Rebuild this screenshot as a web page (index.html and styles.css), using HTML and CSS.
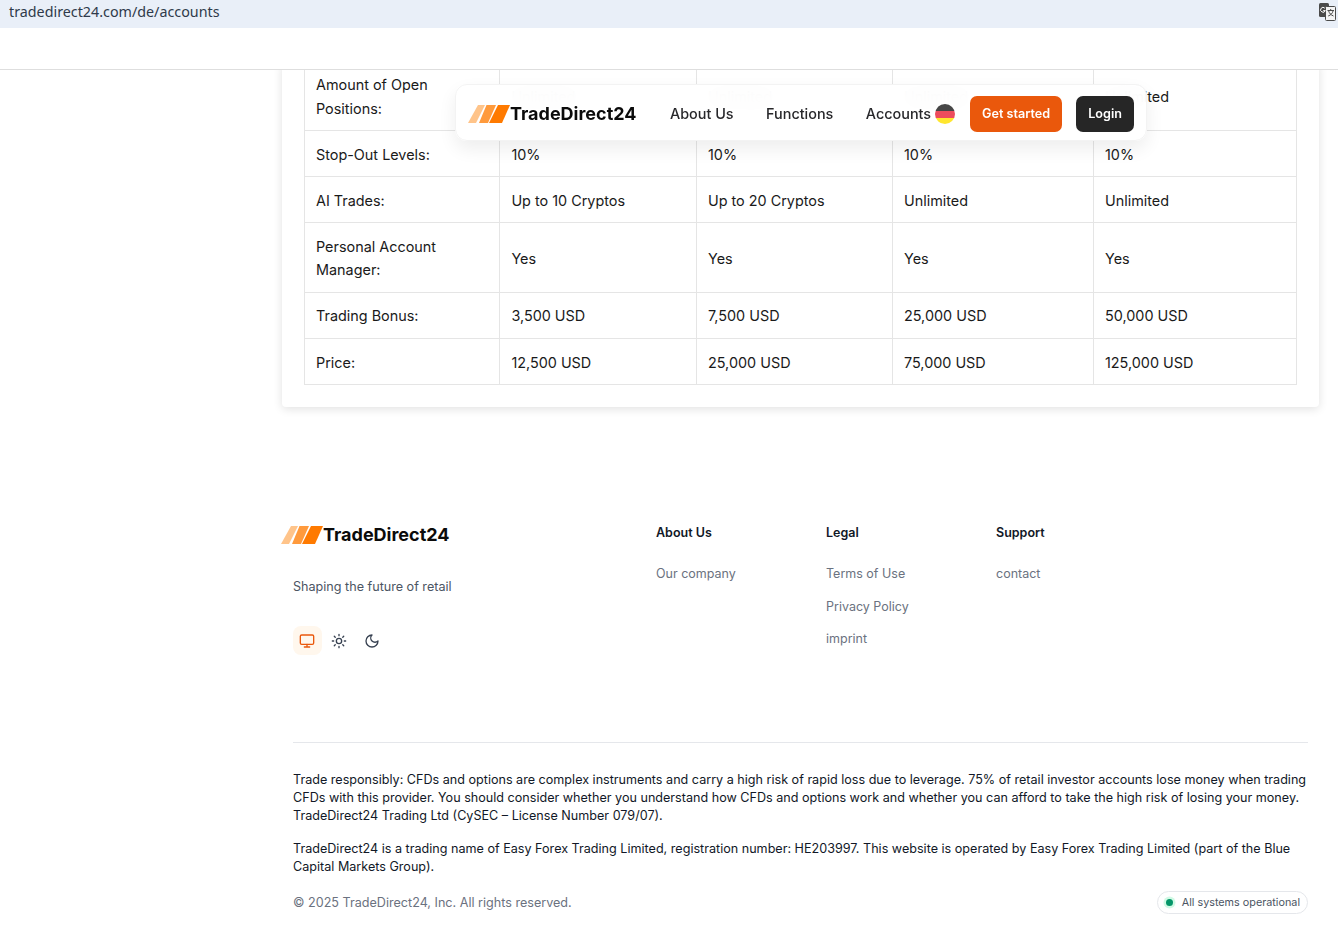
FILE: index.html
```html
<!DOCTYPE html>
<html lang="en">
<head>
<meta charset="utf-8">
<title>TradeDirect24 Accounts</title>
<link rel="stylesheet" href="styles.css">
</head>
<body>
<div class="urlbar">
  <span class="url">tradedirect24.com/de/accounts</span>
  <svg class="translate" viewBox="0 0 18 18" width="18" height="18" aria-hidden="true">
    <rect x="1" y="0" width="10" height="14" rx="1.500" fill="#4a4a4a"/>
    <rect x="7.500" y="3.500" width="10" height="14" rx="1" fill="#f4f4f4" stroke="#4a4a4a"/>
    <path d="M6.800 5.200a2.400 2.400 0 1 0 .5 2.400H5.200" fill="none" stroke="#fff" stroke-width="1"/>
    <path d="M9.500 7.500h6.500M12.700 6v1.500M10.500 7.500c.8 3 2.500 4.500 5 5.500M15.200 7.500c-.6 2.800-2.300 4.500-5 5.500" fill="none" stroke="#4a4a4a" stroke-width="1"/>
  </svg>
</div>
<div class="tabstrip"></div>

<main class="viewport">
  <nav class="floatnav">
    <a class="brand">
      <svg class="logo" viewBox="0 0 42 18" width="42" height="18" aria-hidden="true">
        <polygon points="0,18 8,18 17,0 10,0" fill="#ffc48a"/>
        <polygon points="11,18 20,18 28,0 18.500,0" fill="#ff9a3c"/>
        <polygon points="21,18 34,18 42,0 30,0" fill="#ff7a00"/>
      </svg>
      <span class="brandname">TradeDirect24</span>
    </a>
    <div class="navlinks">
      <a>About Us</a>
      <a>Functions</a>
      <a>Accounts</a>
    </div>
    <svg class="flag" viewBox="0 0 20 20" width="20" height="20" aria-hidden="true">
      <defs><clipPath id="flagclip"><circle cx="10" cy="10" r="10"/></clipPath></defs>
      <g clip-path="url(#flagclip)">
        <rect width="20" height="7" fill="#464646"/>
        <rect y="7" width="20" height="7" fill="#ed4c5c"/>
        <rect y="14" width="20" height="6" fill="#ffe62e"/>
      </g>
    </svg>
    <a class="btn btn-orange">Get started</a>
    <a class="btn btn-dark">Login</a>
  </nav>

  <section class="card">
    <table class="plans">
      <colgroup>
        <col class="c1"><col class="c2"><col class="c3"><col class="c4"><col class="c5">
      </colgroup>
      <tbody>
        <tr class="row-clipped"><td>Amount of Open Positions:</td><td>Unlimited</td><td>Unlimited</td><td>Unlimited</td><td>Unlimited</td></tr>
        <tr class="row-low"><td>Stop-Out Levels:</td><td>10%</td><td>10%</td><td>10%</td><td>10%</td></tr>
        <tr class="row-low"><td>AI Trades:</td><td>Up to 10 Cryptos</td><td>Up to 20 Cryptos</td><td>Unlimited</td><td>Unlimited</td></tr>
        <tr class="row-tall"><td>Personal Account Manager:</td><td class="cell-low">Yes</td><td class="cell-low">Yes</td><td class="cell-low">Yes</td><td class="cell-low">Yes</td></tr>
        <tr><td>Trading Bonus:</td><td>3,500 USD</td><td>7,500 USD</td><td>25,000 USD</td><td>50,000 USD</td></tr>
        <tr class="row-low"><td>Price:</td><td>12,500 USD</td><td>25,000 USD</td><td>75,000 USD</td><td>125,000 USD</td></tr>
      </tbody>
    </table>
  </section>

  <footer class="footer">
    <div class="footgrid">
      <div class="footbrand">
        <a class="brand brand-foot">
          <svg class="logo" viewBox="0 0 42 18" width="42" height="18" aria-hidden="true">
            <polygon points="0,18 8,18 17,0 10,0" fill="#ffc48a"/>
            <polygon points="11,18 20,18 28,0 18.500,0" fill="#ff9a3c"/>
            <polygon points="21,18 34,18 42,0 30,0" fill="#ff7a00"/>
          </svg>
          <span class="brandname">TradeDirect24</span>
        </a>
        <p class="tagline">Shaping the future of retail</p>
        <div class="themes">
          <button class="theme theme-on" aria-label="System">
            <svg viewBox="0 0 24 24" width="16" height="16" fill="none" stroke="currentColor" stroke-width="2" stroke-linecap="round" stroke-linejoin="round"><rect x="2" y="3" width="20" height="14" rx="2"/><path d="M8 21h8M12 17v4"/></svg>
          </button>
          <button class="theme theme-sun" aria-label="Light">
            <svg viewBox="0 0 24 24" width="16" height="16" fill="none" stroke="currentColor" stroke-width="2" stroke-linecap="round" stroke-linejoin="round"><circle cx="12" cy="12" r="4"/><path d="M12 2v2M12 20v2M4.930 4.930l1.410 1.410M17.660 17.660l1.410 1.410M2 12h2M20 12h2M6.340 17.660l-1.410 1.410M19.070 4.930l-1.410 1.410"/></svg>
          </button>
          <button class="theme" aria-label="Dark">
            <svg viewBox="0 0 24 24" width="16" height="16" fill="none" stroke="currentColor" stroke-width="2" stroke-linecap="round" stroke-linejoin="round"><path d="M12 3a6 6 0 0 0 9 9 9 9 0 1 1-9-9Z"/></svg>
          </button>
        </div>
      </div>
      <div class="footcol">
        <h4>About Us</h4>
        <a>Our company</a>
      </div>
      <div class="footcol">
        <h4>Legal</h4>
        <a>Terms of Use</a>
        <a>Privacy Policy</a>
        <a>imprint</a>
      </div>
      <div class="footcol">
        <h4>Support</h4>
        <a>contact</a>
      </div>
    </div>

    <div class="legal">
      <p>Trade responsibly: CFDs and options are complex instruments and carry a high risk of rapid loss due to leverage. 75% of retail investor accounts lose money when trading CFDs with this provider. You should consider whether you understand how CFDs and options work and whether you can afford to take the high risk of losing your money. TradeDirect24 Trading Ltd (CySEC – License Number 079/07).</p>
      <p>TradeDirect24 is a trading name of Easy Forex Trading Limited, registration number: HE203997. This website is operated by Easy Forex Trading Limited (part of the Blue Capital Markets Group).</p>
    </div>

    <div class="bottom">
      <span class="copy">© 2025 TradeDirect24, Inc. All rights reserved.</span>
      <span class="status"><i class="dot"></i>All systems operational</span>
    </div>
  </footer>
</main>
</body>
</html>
```
FILE: styles.css
```css
* { box-sizing: border-box; }
html, body { margin: 0; height: 951px; overflow: hidden; background: #fff; }
body { font-family: Inter, "Liberation Sans", sans-serif; color: #111827; }
a { color: inherit; text-decoration: none; }

.urlbar {
  height: 28px;
  background: #e9eff8;
  display: flex;
  align-items: center;
  justify-content: space-between;
  padding: 0 2px 5px 9px;
}
.url { font-family: "Noto Sans", sans-serif; font-size: 14.300px; color: #2f3a4a; }
.tabstrip { height: 42px; background: #fff; border-bottom: 1px solid #dedede; }

.viewport { position: relative; height: 881px; overflow: hidden; padding-left: 282px; }

.floatnav {
  position: absolute;
  left: 455px;
  top: 14px;
  width: 692px;
  height: 57px;
  display: flex;
  align-items: center;
  padding: 2px 0 0 12px;
  background: rgba(255, 255, 255, .94);
  -webkit-backdrop-filter: blur(10px);
  backdrop-filter: blur(10px);
  border: 1px solid #f3f3f3;
  border-radius: 12px;
  box-shadow: 0 8px 18px rgba(0, 0, 0, .07);
  z-index: 5;
}
.brand { display: flex; align-items: center; }
.brandname { font-size: 18px; font-weight: 700; color: #0b0b0b; }
.navlinks { display: flex; gap: 32.500px; margin-left: 33.500px; font-size: 14.400px; font-weight: 500; color: #27272a; }
.flag { margin-left: 4px; }
.btn {
  display: flex; align-items: center; justify-content: center;
  height: 36px; border-radius: 7px;
  font-size: 12.600px; font-weight: 600; color: #fff;
}
.btn-orange { width: 92px; margin-left: 15px; background: #ea580c; }
.btn-dark { width: 58px; margin-left: 14px; background: #262626; }

.card {
  width: 1037px;
  margin-top: -8px;
  padding: 0 22px 22px;
  background: #fff;
  border-radius: 4px;
  box-shadow: 0 2px 10px rgba(0, 0, 0, .12);
}
.plans {
  width: 993px;
  table-layout: fixed;
  border-collapse: collapse;
  font-size: 14.400px;
  line-height: 23px;
  color: #1a1a1a;
}
.c1 { width: 195.400px; } .c2 { width: 196.600px; } .c3 { width: 196px; } .c4 { width: 201px; } .c5 { width: 203px; }
.plans td { border: 1px solid #e5e5e5; padding: 11px; vertical-align: middle; }
.plans .row-clipped td { padding-top: 9.500px; padding-bottom: 9.500px; line-height: 24px; }
.plans .row-low td { padding-top: 12px; padding-bottom: 10px; }
.plans .row-tall td { padding-top: 11.500px; padding-bottom: 11.500px; }
.plans .row-tall .cell-low { padding-top: 13px; padding-bottom: 11px; }

.footer { margin: 107px 30px 0 11px; }
.footgrid { display: grid; grid-template-columns: 363px 170px 170px 170px; height: 228px; padding-top: 10px; }
.brand-foot { margin-left: -12px; }
.tagline { margin: 32px 0 0; font-size: 12.600px; line-height: 20px; color: #4b5563; }
.themes { display: flex; gap: 3.500px; margin-top: 29px; }
.theme {
  width: 29px; height: 29px; padding: 0 1px 0 0; border: 0; border-radius: 8px;
  background: transparent; color: #374151;
  display: flex; align-items: center; justify-content: center;
}
.theme-on { background: #fff7ed; color: #ea580c; }
.theme-sun { padding-right: 2px; }
.footcol { display: flex; flex-direction: column; align-items: flex-start; gap: 12.500px; font-size: 12.500px; line-height: 20px; color: #6b7280; }
.footcol h4 { margin: -1px 0 8.500px; font-size: 12.500px; line-height: 20px; font-weight: 600; color: #111827; }

.legal { border-top: 1px solid #e5e7eb; padding-top: 28px; font-size: 12.600px; line-height: 18px; color: #111827; }
.legal p { margin: 0 0 15px; }

.bottom { display: flex; align-items: center; justify-content: space-between; margin-top: 8px; }
.copy { font-size: 12.600px; color: #6b7280; }
.status {
  display: flex; align-items: center;
  height: 23px; padding: 0 7px;
  border: 1px solid #e5e7eb; border-radius: 12px;
  font-size: 10.800px; color: #4b5563;
}
.dot { width: 7px; height: 7px; margin: 0 9px 0 1px; border-radius: 50%; background: #059669; box-shadow: 0 0 0 2.500px #d1fae5; }
```
